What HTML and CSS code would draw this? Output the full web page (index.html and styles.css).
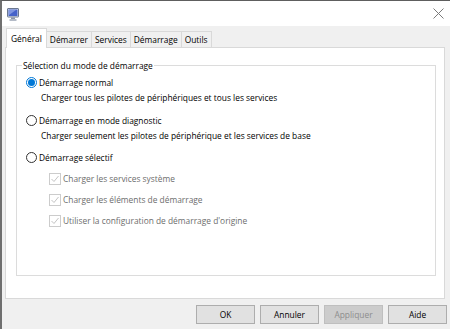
FILE: index.html
```html
<!DOCTYPE html>
<html lang="fr">
<head>
    <meta charset="UTF-8">
    <meta name="viewport" content="width=device-width, initial-scale=1.0">
    <title>Configuration du système</title>
    <link rel="stylesheet" href="styles.css">
</head>
<body>
    <div class="window">
        <div class="titlebar">
            <svg class="app-icon" width="13" height="13" viewBox="0 0 13 13">
                <rect x="0.5" y="0.5" width="11" height="8.5" rx="0.5" fill="#dfe5ee" stroke="#6b7890"/>
                <rect x="1.5" y="1.5" width="9" height="6.5" fill="#4562c9"/>
                <path d="M2 2 L9 2 L2 7 Z" fill="#7f95e0"/>
                <rect x="4" y="9.5" width="4" height="1.5" fill="#8c96a6"/>
                <path d="M2.5 12 H9.5" stroke="#6b7890" stroke-width="1"/>
            </svg>
            <svg class="close" width="11" height="11" viewBox="0 0 11 11">
                <path d="M0.5 0.5 L10.5 10.5 M10.5 0.5 L0.5 10.5" stroke="#7a7a7a" stroke-width="1" fill="none"/>
            </svg>
        </div>
        <div class="main">
            <div class="tabs">
                <div class="tab active">Général</div>
                <div class="tab">Démarrer</div>
                <div class="tab">Services</div>
                <div class="tab">Démarrage</div>
                <div class="tab last">Outils</div>
            </div>
            <div class="panel">
                <fieldset class="group">
                    <legend>Sélection du mode de démarrage</legend>
                    <div class="option first">
                        <span class="radio checked"></span>Démarrage normal
                    </div>
                    <p class="desc">Charger tous les pilotes de périphériques et tous les services</p>
                    <div class="option">
                        <span class="radio"></span>Démarrage en mode diagnostic
                    </div>
                    <p class="desc">Charger seulement les pilotes de périphérique et les services de base</p>
                    <div class="option third">
                        <span class="radio"></span>Démarrage sélectif
                    </div>
                    <div class="check">
                        <span class="box"><svg width="10" height="10" viewBox="0 0 10 10"><path d="M1.5 5 L4 7.5 L8.5 2" stroke="#c4c4c4" stroke-width="1" fill="none"/></svg></span>Charger les services système
                    </div>
                    <div class="check">
                        <span class="box"><svg width="10" height="10" viewBox="0 0 10 10"><path d="M1.5 5 L4 7.5 L8.5 2" stroke="#c4c4c4" stroke-width="1" fill="none"/></svg></span>Charger les éléments de démarrage
                    </div>
                    <div class="check">
                        <span class="box"><svg width="10" height="10" viewBox="0 0 10 10"><path d="M1.5 5 L4 7.5 L8.5 2" stroke="#c4c4c4" stroke-width="1" fill="none"/></svg></span>Utiliser la configuration de démarrage d'origine
                    </div>
                </fieldset>
            </div>
            <div class="buttons">
                <button>OK</button>
                <button>Annuler</button>
                <button disabled>Appliquer</button>
                <button>Aide</button>
            </div>
        </div>
    </div>
</body>
</html>
```
FILE: styles.css
```css
body {
    margin: 0;
    font-family: "Open Sans", "Noto Sans", sans-serif;
    font-size: 8.4px;
    color: #000;
    background: #f0f0f0;
}

.window {
    height: 329px;
    box-sizing: border-box;
    border-top: 1px solid #5e5e5e;
    border-left: 2px solid #6f6f6f;
    background: #f0f0f0;
}

.titlebar {
    height: 25px;
    background: #fff;
    display: flex;
    align-items: center;
    justify-content: space-between;
    padding: 0 6px 0 5px;
}

.app-icon {
    margin-top: 1px;
}

.main {
    padding-top: 3px;
}

.tabs {
    display: flex;
    align-items: flex-end;
    height: 18px;
    margin-left: 4px;
    position: relative;
    z-index: 1;
}

.tab {
    height: 15px;
    line-height: 15px;
    padding: 0 3px;
    border: 1px solid #d9d9d9;
    border-bottom: none;
    border-right: none;
    background: #f0f0f0;
}

.tab.last {
    border-right: 1px solid #d9d9d9;
}

.tab.active {
    height: 19px;
    line-height: 20px;
    padding: 0 4px;
    margin-bottom: -1px;
    background: #fff;
    border-right: 1px solid #d9d9d9;
}

.tab.active + .tab {
    border-left: none;
}

.panel {
    background: #fff;
    border: 1px solid #d9d9d9;
    margin: 0 5px 0 3px;
    height: 250px;
}

.group {
    margin: 11px 8px 0 10px;
    padding: 0 0 0 9px;
    height: 215px;
    border: 1px solid #dcdcdc;
}

.group legend {
    margin-left: -4px;
    padding: 0 1px;
    line-height: 13px;
}

.option {
    display: flex;
    align-items: center;
    height: 13px;
    margin-top: 10px;
}

.option.first {
    margin-top: 4px;
}

.option.third {
    margin-top: 9px;
}

.radio {
    width: 9px;
    height: 9px;
    border: 1px solid #333;
    border-radius: 50%;
    margin-right: 2px;
    box-sizing: content-box;
    display: inline-flex;
    align-items: center;
    justify-content: center;
}

.radio.checked {
    border-color: #0078d7;
}

.radio.checked::after {
    content: "";
    width: 7px;
    height: 7px;
    border-radius: 50%;
    background: #0078d7;
}

.desc {
    margin: 2px 0 0 15px;
    line-height: 13px;
    height: 13px;
}

.check {
    display: flex;
    align-items: center;
    height: 13px;
    margin: 8px 0 0 23px;
    color: #6d6d6d;
}

.box {
    width: 10px;
    height: 10px;
    border: 1px solid #cccccc;
    margin-right: 2px;
    display: inline-flex;
}

.buttons {
    display: flex;
    justify-content: flex-end;
    gap: 5px;
    padding-right: 3px;
    margin-top: 6px;
}

button {
    width: 59px;
    height: 19px;
    padding: 0;
    font-family: inherit;
    font-size: 8.4px;
    color: #000;
    background: #e1e1e1;
    border: 1px solid #adadad;
}

button:disabled {
    background: #cccccc;
    border-color: #bfbfbf;
    color: #8d8d8d;
}
```
